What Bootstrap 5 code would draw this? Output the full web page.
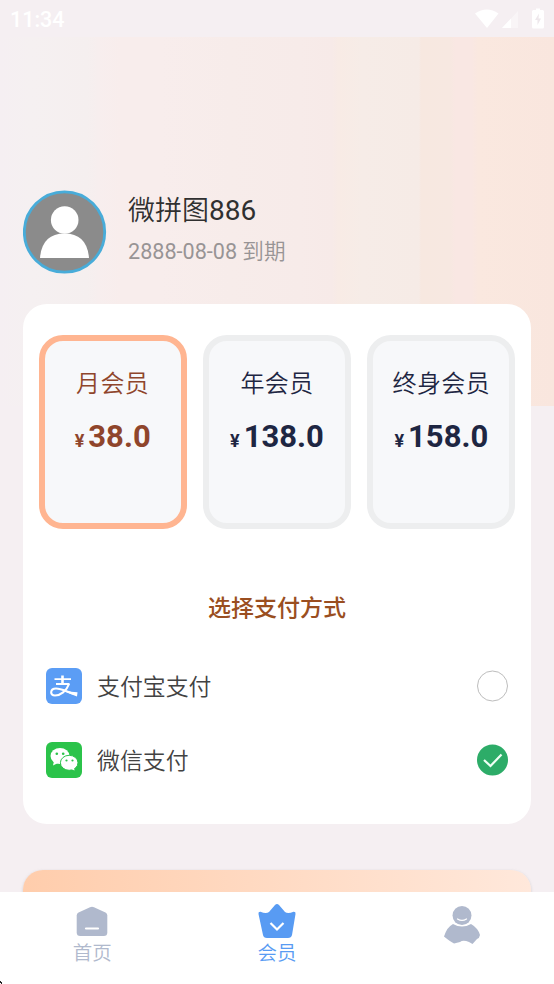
<!DOCTYPE html>
<html lang="zh-CN">
<head>
<meta charset="utf-8">
<meta name="viewport" content="width=device-width, initial-scale=1">
<title>会员</title>
<link href="https://cdn.jsdelivr.net/npm/bootstrap@5.3.0/dist/css/bootstrap.min.css" rel="stylesheet">
<style>
  body { font-family: Roboto, "Noto Sans CJK SC", sans-serif; background: #f5eff2; height: 984px; overflow: hidden; line-height: 1; }
  svg { display: block; flex: none; }
  .status { height: 37px; padding: 2px 9px 0 10px; color: #fff; font-size: 21.5px; font-weight: 500; }
  .screen { height: 855px; padding: 153px 23px 0; overflow: hidden;
    background: linear-gradient(90deg, #f5eff2 0, #f5f0f1 32px, #f5efef 88px, #f7eeee 98px, #f8edec 120px, #f8edec 160px, #f7ecea 230px, #f7ebe9 300px, #f7eae8 332px, #f8ebe5 338px, #f6ece7 362px, #f6ebe6 419px, #f7e8e0 421px, #f7e8e1 450px, #f9e7e3 456px, #f9e7e3 472px, #fae8df 478px, #f9e6de 554px) 0 0 / 100% 369px no-repeat; }
  .profile { height: 84px; }
  .profile-text { padding-left: 5px; }
  .uname { font-size: 27px; color: #303030; font-weight: 350; margin-top: 7px; }
  .expiry { font-size: 21.6px; color: #989495; font-weight: 350; margin-top: 16px; }
  .digits { font-weight: 400; }
  .uname .digits { font-size: 28px; }
  .panel { margin-top: 30px; height: 520px; border-radius: 24px; background: #fff; padding: 31px 15.5px 0; }
  .plan { height: 194px; border: 6px solid #edeeef; border-radius: 24px; background: #f7f8fa; color: #1e2642; padding-top: 31px; }
  .plan.active { border-color: #ffb591; color: #8f452b; }
  .plan-name { font-size: 24px; letter-spacing: .4px; font-weight: 350; line-height: 24px; }
  .price { font-size: 31px; font-weight: 700; margin-top: 23px; line-height: 36px; }
  .price span { font-size: 18px; margin-right: 4px; }
  .pay-title { font-size: 23px; font-weight: 500; color: #9a4e20; margin-top: 68px; line-height: 24px; }
  .pays { margin: 46px 7.5px 0; }
  .pay { height: 37px; margin-bottom: 37px; font-size: 22.9px; color: #424242; font-weight: 350; }
  .pay span { padding-top: 5px; margin-left: -1px; }
  .buy { margin-top: 46px; height: 60px; border-radius: 20px; background: linear-gradient(90deg, #ffcdac, #ffe8db); box-shadow: 0 1px 3px #9996; }
  .tabs { height: 92px; background: #fff; color: #b0b9cd; font-size: 19.5px; font-weight: 350; }
  .tab { padding-top: 10px; }
  .tab svg { margin-bottom: 6px; }
  .tab.current { color: #589bf3; }
  .corner { left: 0; bottom: 0; }
</style>
<script src="https://cdn.jsdelivr.net/npm/bootstrap@5.3.0/dist/js/bootstrap.bundle.min.js"></script>
</head>
<body>
<header class="status d-flex align-items-center justify-content-between">
  <span>11:34</span>
  <svg width="70" height="24" viewBox="475 7 70 24" fill="#fff">
    <path d="M475 12.500Q487 4.500 498.500 12.500L487 27Z"/>
    <path d="M502 27 518 10V27Z" opacity=".4"/><path d="M502 27 511 17.500V27Z"/>
    <path d="M536 9V7.500h4V9h2.500q1.500 0 1.500 1.500v15.500q0 1.500-1.500 1.500h-9q-1.500 0-1.500-1.500V10.500q0-1.500 1.500-1.500Z"/><path d="M539 12.500l-4 6.500h2.500v5l3.500-6.500h-2.500Z" fill="#eee8ec"/>
  </svg>
</header>
<main class="screen">
  <section class="profile d-flex">
    <svg width="84" height="84" viewBox="0 0 84 84"><circle cx="41.500" cy="42" r="40.200" fill="#8b8b8b" stroke="#48acd9" stroke-width="2.800"/><circle cx="41.700" cy="30" r="13.800" fill="#fff"/><path d="M17 68q2-24.500 24.500-24.500Q64 43.500 66 68Z" fill="#fff"/></svg>
    <div class="profile-text ms-3">
      <div class="uname">微拼图<span class="digits">886</span></div>
      <div class="expiry"><span class="digits">2888-08-08</span> 到期</div>
    </div>
  </section>
  <section class="panel">
    <div class="d-flex gap-3 text-center">
      <div class="plan active flex-fill w-100"><div class="plan-name">月会员</div><div class="price"><span>¥</span>38.0</div></div>
      <div class="plan flex-fill w-100"><div class="plan-name">年会员</div><div class="price"><span>¥</span>138.0</div></div>
      <div class="plan flex-fill w-100"><div class="plan-name">终身会员</div><div class="price"><span>¥</span>158.0</div></div>
    </div>
    <div class="pay-title text-center">选择支付方式</div>
    <div class="pays">
      <div class="pay d-flex align-items-center">
        <svg class="me-3" width="36" height="36" viewBox="0 0 36 36"><rect width="36" height="36" rx="6" fill="#5b9df5"/><g fill="none" stroke="#fff"><path d="M16.500 7.500V16" stroke-width="2.600"/><path d="M8.500 11.200H25M10 16H23.500" stroke-width="1.800"/><path d="M23 16C20.500 23 14.500 27.500 9 27.500 3.500 27.500 4 20.500 10 20.500 17 20.500 22 25 31 26.500" stroke-width="2.100"/></g><path d="M19 22.700Q25 24 31.500 24.300L31 28.500Q25 26.500 19 23.500Z" fill="#fff"/></svg>
        <span class="flex-grow-1">支付宝支付</span>
        <svg width="32" height="32"><circle cx="16.500" cy="16" r="15" fill="#fff" stroke="#bdbdbd"/></svg>
      </div>
      <div class="pay d-flex align-items-center">
        <svg class="me-3" width="36" height="36" viewBox="0 0 36 36"><rect width="36" height="36" rx="6" fill="#2bc34a"/><path d="M8 19 7 23.500 12 21Z" fill="#fff"/><ellipse cx="14" cy="14" rx="9.500" ry="8" fill="#fff"/><ellipse cx="23.200" cy="20.800" rx="8.800" ry="7.500" fill="#fff" stroke="#2bc34a"/><path d="M24 26.500 28.500 28.500 28 25Z" fill="#fff"/><g fill="#2bc34a"><circle cx="10.800" cy="11.700" r="1.300"/><circle cx="17.200" cy="11.700" r="1.300"/><circle cx="20.500" cy="18.500" r="1.100"/><circle cx="26.500" cy="18.500" r="1.100"/></g></svg>
        <span class="flex-grow-1">微信支付</span>
        <svg width="32" height="32"><circle cx="16.500" cy="16" r="15.500" fill="#2dac68"/><path d="M8 16 14.500 22 25.500 10.500" fill="none" stroke="#f0fff5" stroke-width="2.200"/></svg>
      </div>
    </div>
  </section>
  <div class="buy"></div>
</main>
<nav class="tabs d-flex position-relative">
  <div class="tab w-100 d-flex flex-column align-items-center"><svg width="36" height="36" viewBox="0 0 36 36"><path d="M2.700 13.500Q2.700 11.500 4.500 10.500L16 5.200Q18 4.300 20 5.200L31.500 10.500Q33.300 11.500 33.300 13.500V30.500Q33.300 34 29.800 34H6.200Q2.700 34 2.700 30.500Z" fill="#b0b9cd"/><path d="M12 26.500H24" stroke="#fff" stroke-width="2.200" stroke-linecap="round"/></svg><span>首页</span></div>
  <div class="tab current w-100 d-flex flex-column align-items-center"><svg width="38" height="36" viewBox="0 0 38 36"><path d="M.5 12Q0 9.500 2.500 9.700Q8 12 11 10L17 3Q19 1 21 3L27 10Q30 12 35.500 9.700Q38 9.500 37.500 12L34 33Q33.300 36 30 36H9Q5.500 36 5 33Z" fill="#589bf3"/><path d="M12.500 21 19 27.500 25.500 21" fill="none" stroke="#fff" stroke-width="2.200"/></svg><span>会员</span></div>
  <div class="tab w-100 d-flex flex-column align-items-center"><svg width="38" height="44" viewBox="0 0 38 44"><circle cx="19" cy="13.500" r="9.500" fill="#b0b9cd"/><path d="M14.500 17Q19 19.800 23.500 17" fill="none" stroke="#fff" stroke-width="1.300" stroke-linecap="round"/><path d="M10 22Q19 27 28 22Q35 26 37 33Q36.500 36 34 37L29.500 42 26 40Q20 37.500 17 40L11 41.500Q7 39.500 1 34.500Q4 25 10 22Z" fill="#b0b9cd"/></svg></div>
  <svg class="corner position-absolute" width="3" height="4"><path d="M0 1h1v1h1v2H1V3H0Z" fill="#222"/></svg>
</nav>
</body>
</html>
